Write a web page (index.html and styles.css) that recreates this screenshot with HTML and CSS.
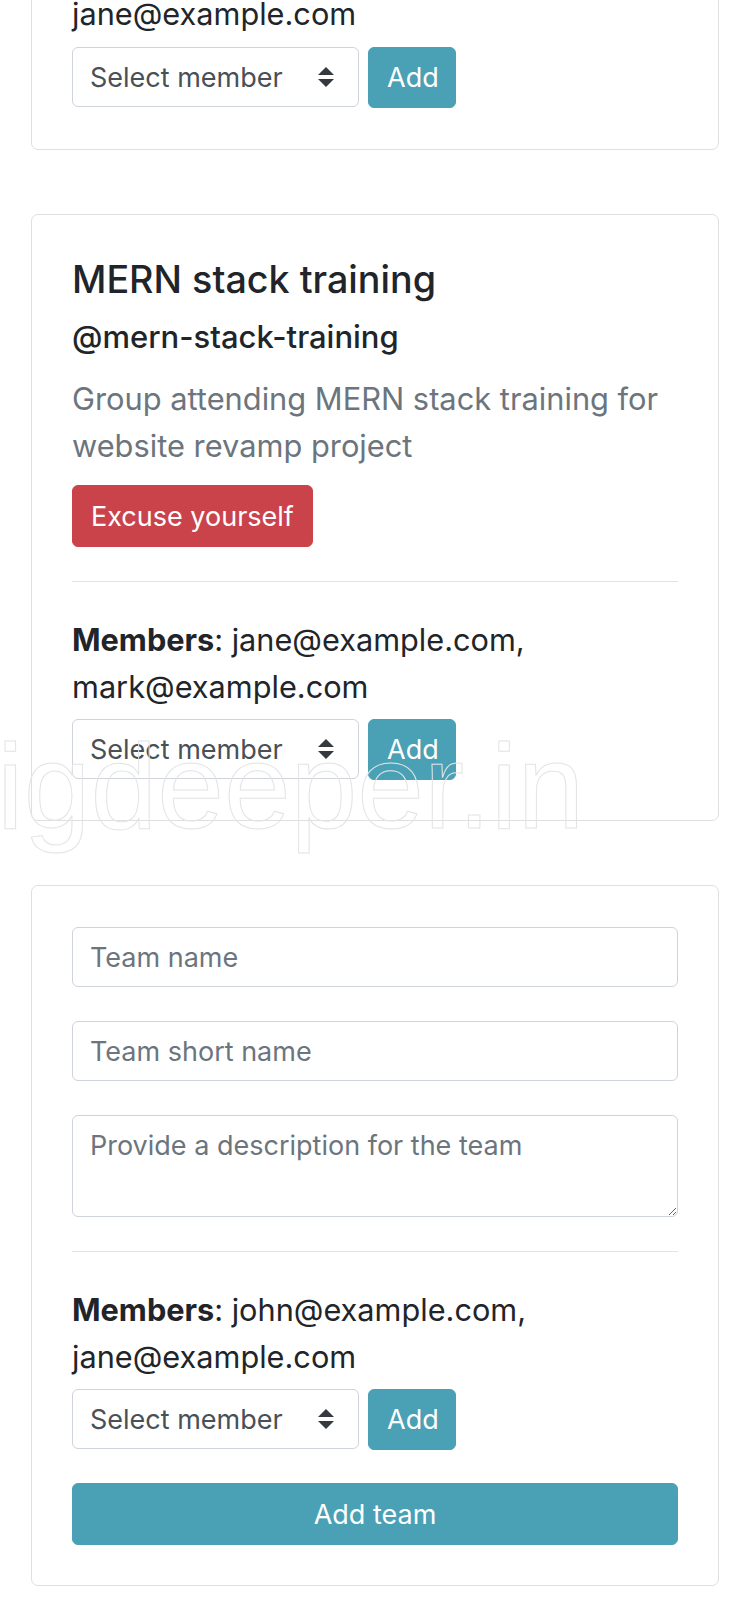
FILE: index.html
```html
<!DOCTYPE html>
<html lang="en">
<head>
<meta charset="utf-8">
<title>Teams</title>
<link rel="stylesheet" href="styles.css">
</head>
<body>
<div class="page">
  <div class="card card-partial">
    <p class="members members-first">jane@example.com</p>
    <div class="add-row">
      <span class="select-wrap">
        <select class="select"><option>Select member</option></select>
        <svg class="select-arrow" viewBox="0 0 4 5" width="16" height="20"><path d="M2 0L0 2h4zm0 5L0 3h4z" fill="#343a40"/></svg>
      </span>
      <button class="btn btn-info">Add</button>
    </div>
  </div>

  <div class="card">
    <h4 class="title">MERN stack training</h4>
    <h5 class="subtitle">@mern-stack-training</h5>
    <p class="desc">Group attending MERN stack training for website revamp project</p>
    <button class="btn btn-danger">Excuse yourself</button>
    <hr class="sep">
    <p class="members"><strong>Members</strong>: jane@example.com, mark@example.com</p>
    <div class="add-row">
      <span class="select-wrap">
        <select class="select"><option>Select member</option></select>
        <svg class="select-arrow" viewBox="0 0 4 5" width="16" height="20"><path d="M2 0L0 2h4zm0 5L0 3h4z" fill="#343a40"/></svg>
      </span>
      <button class="btn btn-info">Add</button>
    </div>
  </div>

  <div class="card">
    <input class="field" type="text" placeholder="Team name">
    <input class="field" type="text" placeholder="Team short name">
    <textarea class="field area" placeholder="Provide a description for the team"></textarea>
    <hr class="sep">
    <p class="members"><strong>Members</strong>: john@example.com, jane@example.com</p>
    <div class="add-row add-row-spaced">
      <span class="select-wrap">
        <select class="select"><option>Select member</option></select>
        <svg class="select-arrow" viewBox="0 0 4 5" width="16" height="20"><path d="M2 0L0 2h4zm0 5L0 3h4z" fill="#343a40"/></svg>
      </span>
      <button class="btn btn-info">Add</button>
    </div>
    <button class="btn btn-info btn-block">Add team</button>
  </div>

  <div class="watermark">igdeeper.in</div>
</div>
</body>
</html>
```

FILE: styles.css
```css
* { box-sizing: border-box; }

html, body {
  margin: 0;
  padding: 0;
  background: #ffffff;
}

body {
  font-family: "Inter", "Noto Sans", "Liberation Sans", sans-serif;
  color: #212529;
  overflow: hidden;
}

.page {
  position: relative;
  width: 688px;
  margin-left: 31px;
}

.card {
  border: 1px solid #dfdfdf;
  border-radius: 7px;
  padding: 41px 40px 40px 40px;
  margin-bottom: 64px;
  display: flex;
  flex-direction: column;
  align-items: flex-start;
}

.card-partial {
  margin-top: -52px;
  padding-bottom: 41px;
}

.title {
  margin: 0 0 17px 0;
  font-size: 37.7px;
  line-height: 46px;
  font-weight: 500;
}

.subtitle {
  margin: 0 0 20px 0;
  font-size: 31px;
  line-height: 36px;
  font-weight: 500;
}

.desc {
  margin: 0 0 16px 0;
  font-size: 30.8px;
  line-height: 47px;
  color: #6c757d;
}

.members {
  margin: 0 0 9px 0;
  font-size: 30.7px;
  line-height: 47px;
}

.members strong { font-weight: 700; }

.members-first { margin-bottom: 10px; }

.sep {
  align-self: stretch;
  margin: 34px 0 34px 0;
  border: 0;
  border-top: 1px solid #e3e3e3;
  height: 0;
}

.add-row {
  display: flex;
  gap: 9px;
}

.add-row-spaced { margin-bottom: 33px; }

.select-wrap {
  position: relative;
  display: block;
}

.select {
  display: block;
  appearance: none;
  -webkit-appearance: none;
  width: 287px;
  height: 60px;
  margin: 0;
  padding: 0 40px 0 17px;
  font-family: inherit;
  font-size: 27px;
  color: #495057;
  background: #ffffff;
  border: 1px solid #ced4da;
  border-radius: 6px;
}

.select-arrow {
  position: absolute;
  right: 25px;
  top: 20px;
  pointer-events: none;
}

.btn {
  font-family: inherit;
  font-size: 27px;
  font-weight: 400;
  color: #ffffff;
  border: 1px solid transparent;
  border-radius: 6px;
  height: 61px;
  padding: 0 18px;
  margin: 0;
  cursor: pointer;
}

.btn-info {
  background: #4aa1b6;
  border-color: #4aa1b6;
  width: 88px;
}

.btn-danger {
  background: #ca434b;
  border-color: #ca434b;
  height: 62px;
}

.btn-block {
  align-self: stretch;
  width: auto;
  height: 62px;
}

.field {
  align-self: stretch;
  display: block;
  height: 60px;
  margin: 0 0 34px 0;
  padding: 0 17px;
  font-family: inherit;
  font-size: 27px;
  color: #495057;
  background: #ffffff;
  border: 1px solid #ced4da;
  border-radius: 6px;
}

.field::placeholder { color: #6c757d; }

.area {
  height: 102px;
  padding-top: 11px;
  line-height: 38px;
  margin-bottom: 0;
  resize: vertical;
}

.watermark {
  position: absolute;
  left: -34px;
  top: 778px;
  font-family: "Liberation Sans", Arial, sans-serif;
  font-size: 120px;
  line-height: 1;
  color: transparent;
  -webkit-text-stroke: 1px #e4e4e4;
  pointer-events: none;
  white-space: nowrap;
}
```
